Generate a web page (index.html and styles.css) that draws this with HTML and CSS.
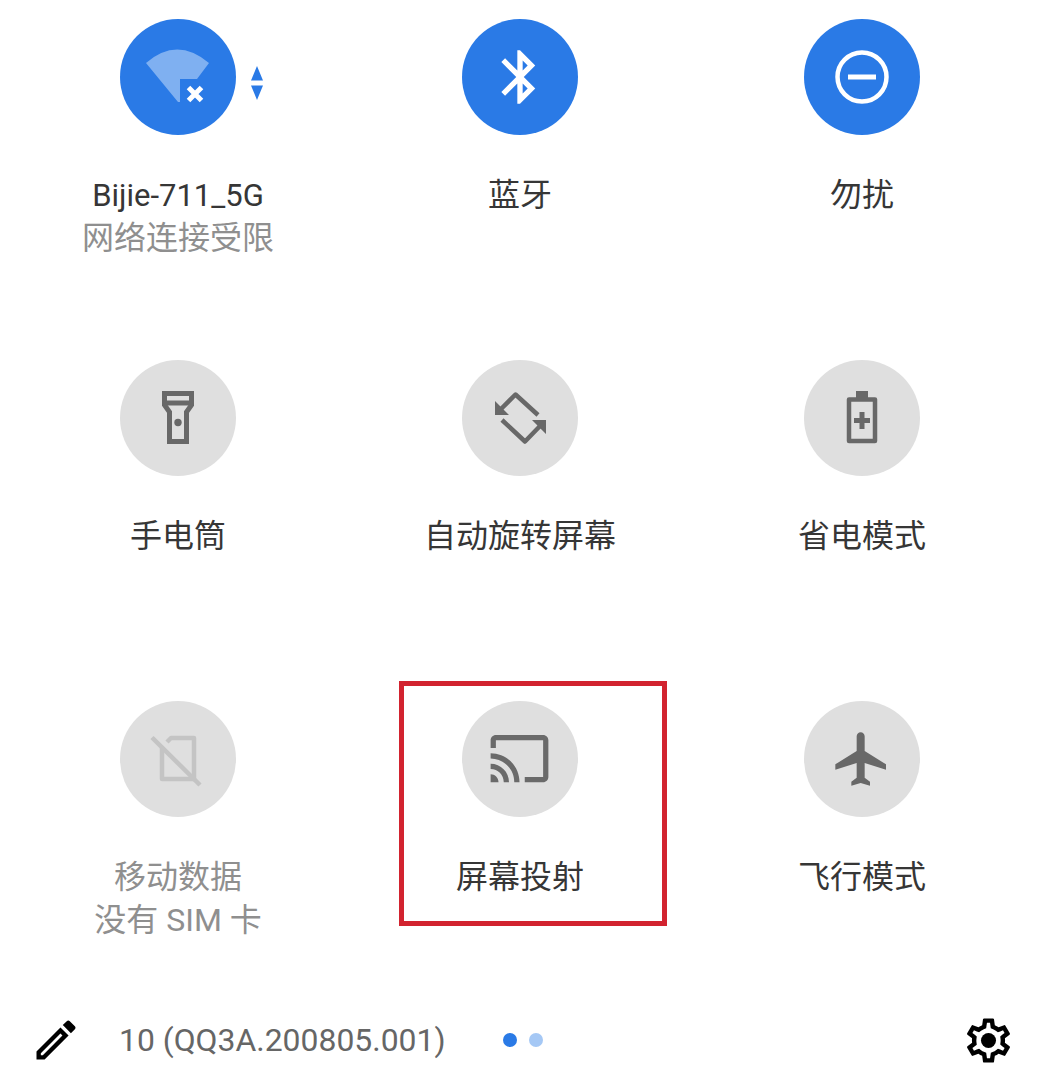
FILE: index.html
```html
<!DOCTYPE html>
<html lang="zh-CN">
<head>
<meta charset="utf-8">
<title>快速设置</title>
<link rel="stylesheet" href="styles.css">
</head>
<body>
<main class="panel">
  <section class="grid">
    <div class="tile">
      <div class="disc on">
        <svg class="art" viewBox="0 0 116 116">
          <path class="wifi" d="M26 44Q57 17 89 44L77 60H60V83H58Z"/>
          <path class="wifi-x" d="M68.500 68.500L81.500 81.500M81.500 68.500L68.500 81.500"/>
        </svg>
        <svg class="updown" viewBox="0 0 12 34"><path d="M6 0L12 14.500H0ZM0 19.500H12L6 34Z"/></svg>
      </div>
      <div class="label latin">Bijie-711_5G</div>
      <div class="label sub">网络连接受限</div>
    </div>
    <div class="tile">
      <div class="disc on">
        <svg class="glyph" viewBox="0 0 24 24"><path d="M17.71 7.71L12 2h-1v7.59L6.41 5 5 6.41 10.59 12 5 17.59 6.41 19 11 14.41V22h1l5.71-5.71-4.3-4.29 4.3-4.29zM13 5.830l1.88 1.88L13 9.590V5.830zm1.88 10.460L13 18.170v-3.760l1.88 1.880z"/></svg>
      </div>
      <div class="label">蓝牙</div>
    </div>
    <div class="tile">
      <div class="disc on">
        <svg class="art" viewBox="0 0 116 116">
          <circle class="dnd" cx="58" cy="58" r="24.500"/>
          <rect class="dnd-bar" x="44" y="55.500" width="28" height="5"/>
        </svg>
      </div>
      <div class="label">勿扰</div>
    </div>

    <div class="tile">
      <div class="disc">
        <svg class="art" viewBox="0 0 116 116">
          <path class="line square" d="M44.500 33.500H71.500V45L66.500 52V81.500H49.500V52L44.500 45Z"/>
          <path class="line square" d="M44.500 43H71.500"/>
          <circle class="fill" cx="58" cy="62.500" r="3.700"/>
        </svg>
      </div>
      <div class="label">手电筒</div>
    </div>
    <div class="tile">
      <div class="disc">
        <svg class="art" viewBox="0 0 116 116">
          <path class="line" d="M76 55L53.500 34.500L38 50"/>
          <path class="line" d="M40 60L63 81.500L79 65"/>
          <path class="fill" d="M33 41V55H47ZM84 60V74L70 60Z"/>
        </svg>
      </div>
      <div class="label">自动旋转屏幕</div>
    </div>
    <div class="tile">
      <div class="disc">
        <svg class="art" viewBox="0 0 116 116">
          <path class="line" d="M45 39.500H71V81H45Z"/>
          <path class="fill" d="M52 31H64V38H52ZM55.500 52H60.500V58H66V63H60.500V69H55.500V63H50V58H55.500Z"/>
        </svg>
      </div>
      <div class="label">省电模式</div>
    </div>

    <div class="tile">
      <div class="disc">
        <svg class="art" viewBox="0 0 116 116">
          <path class="line muted" d="M47 41L51 37H74V78H42V46"/>
          <path class="line muted" d="M32 36.500L80 84"/>
        </svg>
      </div>
      <div class="label dim">移动数据</div>
      <div class="label sub">没有 SIM 卡</div>
    </div>
    <div class="tile">
      <div class="disc">
        <svg class="cast" viewBox="0 0 24 24"><path d="M21 3H3c-1.100 0-2 .9-2 2v3h2V5h18v14h-7v2h7c1.100 0 2-.9 2-2V5c0-1.100-.9-2-2-2zM1 18v3h3c0-1.660-1.340-3-3-3zm0-4v2c2.760 0 5 2.240 5 5h2c0-3.870-3.130-7-7-7zm0-4v2c4.970 0 9 4.030 9 9h2c0-6.080-4.930-11-11-11z"/></svg>
      </div>
      <div class="label">屏幕投射</div>
      <div class="callout"></div>
    </div>
    <div class="tile">
      <div class="disc">
        <svg class="glyph" viewBox="0 0 24 24"><path d="M21 16v-2l-8-5V3.500c0-.83-.67-1.500-1.500-1.500S10 2.670 10 3.500V9l-8 5v2l8-2.500V19l-2 1.500V22l3.500-1 3.500 1v-1.500L13 19v-5.500l8 2.500z"/></svg>
      </div>
      <div class="label">飞行模式</div>
    </div>
  </section>

  <footer class="footer">
    <svg class="tool" viewBox="0 0 24 24"><path d="M3 17.250V21h3.750L17.810 9.940l-3.750-3.750L3 17.250zM5.920 19H5v-.92l9.060-9.060.92.92L5.920 19zM20.710 5.630l-2.340-2.340c-.2-.2-.45-.29-.71-.29s-.51.1-.7.29l-1.830 1.830 3.750 3.750 1.830-1.830c.39-.39.39-1.020 0-1.410z"/></svg>
    <span class="build">10 (QQ3A.200805.001)</span>
    <div class="dots"><span class="dot"></span><span class="dot faint"></span></div>
    <svg class="tool gear" viewBox="0 0 24 24"><path d="M19.430 12.980c.04-.32.07-.64.07-.98 0-.34-.03-.66-.07-.98l2.110-1.650c.19-.15.24-.42.12-.64l-2-3.460c-.09-.16-.26-.25-.44-.25-.06 0-.12.01-.17.03l-2.490 1c-.52-.4-1.080-.73-1.690-.98l-.38-2.650C14.460 2.180 14.250 2 14 2h-4c-.25 0-.46.18-.49.42l-.38 2.650c-.61.25-1.170.59-1.690.98l-2.490-1c-.06-.02-.12-.03-.18-.03-.17 0-.34.09-.43.25l-2 3.460c-.13.22-.07.49.12.64l2.110 1.650c-.04.32-.07.65-.07.98 0 .33.03.66.07.98l-2.110 1.650c-.19.15-.24.42-.12.64l2 3.460c.09.16.26.25.44.25.06 0 .12-.01.17-.03l2.490-1c.52.4 1.080.73 1.690.98l.38 2.650c.03.24.24.42.49.42h4c.25 0 .46-.18.49-.42l.38-2.650c.61-.25 1.170-.59 1.690-.98l2.490 1c.06.02.12.03.18.03.17 0 .34-.09.43-.25l2-3.460c.12-.22.07-.49-.12-.64l-2.110-1.650zm-1.980-1.710c.04.31.05.52.05.73 0 .21-.02.43-.05.73l-.14 1.130.89.7 1.080.84-.7 1.210-1.270-.51-1.040-.42-.9.68c-.43.32-.84.56-1.250.73l-1.060.43-.16 1.130-.2 1.350h-1.400l-.19-1.350-.16-1.130-1.060-.43c-.43-.18-.83-.41-1.230-.71l-.91-.7-1.060.43-1.270.51-.7-1.210 1.080-.84.89-.7-.14-1.130c-.03-.31-.05-.54-.05-.74s.02-.43.05-.73l.14-1.130-.89-.7-1.080-.84.7-1.210 1.270.51 1.040.42.9-.68c.43-.32.84-.56 1.250-.73l1.060-.43.16-1.130.2-1.350h1.390l.19 1.350.16 1.130 1.060.43c.43.18.83.41 1.230.71l.91.7 1.060-.43 1.270-.51.7 1.210-1.070.85-.89.7.14 1.130z"/><circle cx="12" cy="12" r="3.400"/></svg>
  </footer>
</main>
</body>
</html>
```

FILE: styles.css
```css
* {
  box-sizing: border-box;
}

html,
body {
  margin: 0;
  background: #fff;
}

.panel {
  width: 1047px;
  font-family: Roboto, "Noto Sans CJK SC", sans-serif;
}

.grid {
  display: grid;
  grid-template-columns: repeat(3, 342px);
  grid-auto-rows: 310px;
  row-gap: 31px;
  padding-left: 7px;
}

.tile {
  position: relative;
  display: flex;
  flex-direction: column;
  align-items: center;
  padding-top: 19px;
}

.disc {
  position: relative;
  flex: none;
  display: flex;
  align-items: center;
  justify-content: center;
  width: 116px;
  height: 116px;
  margin-bottom: 39px;
  border-radius: 50%;
  background: #dfdfdf;
}

.disc.on {
  background: #2a7ae6;
}

.label {
  font-size: 32px;
  line-height: 43px;
  color: #363636;
  white-space: nowrap;
}

.label.latin {
  font-size: 31px;
}

.label.sub,
.label.dim {
  color: #8f8f8f;
}

.art {
  display: block;
  width: 116px;
  height: 116px;
}

.glyph {
  display: block;
  width: 64px;
  height: 64px;
  fill: #686868;
}

.on .glyph {
  fill: #fff;
}

.cast {
  display: block;
  width: 63px;
  height: 63px;
  margin-left: -1px;
  margin-top: -1px;
  fill: #6a6a6a;
}

.wifi {
  fill: #7fb0f1;
}

.wifi-x {
  fill: none;
  stroke: #fff;
  stroke-width: 5px;
}

.updown {
  position: absolute;
  left: 131px;
  top: 47px;
  width: 12px;
  height: 34px;
  fill: #2a7ae6;
}

.dnd {
  fill: none;
  stroke: #fff;
  stroke-width: 4.500px;
}

.dnd-bar {
  fill: #fff;
}

.line {
  fill: none;
  stroke: #686868;
  stroke-width: 4.500px;
  stroke-linejoin: round;
}

.line.square {
  stroke-width: 5px;
  stroke-linejoin: miter;
}

.line.muted {
  stroke: #c4c4c4;
}

.fill {
  fill: #686868;
}

.callout {
  position: absolute;
  left: 50px;
  top: -1px;
  width: 268px;
  height: 245px;
  border: 5px solid #d2232f;
}

.footer {
  display: flex;
  align-items: center;
  height: 89px;
  padding: 7px 32px 0 30px;
}

.tool {
  flex: none;
  width: 52px;
  height: 52px;
  fill: #000;
}

.gear {
  width: 53px;
  height: 53px;
  margin-left: auto;
}

.build {
  margin-left: 37px;
  font-size: 31.900px;
  line-height: 43px;
  color: #666;
  white-space: nowrap;
}

.dots {
  display: flex;
  gap: 12px;
  margin-left: 57px;
}

.dot {
  width: 14px;
  height: 14px;
  border-radius: 50%;
  background: #2a7ae6;
}

.dot.faint {
  background: #a5c8f5;
}
```
